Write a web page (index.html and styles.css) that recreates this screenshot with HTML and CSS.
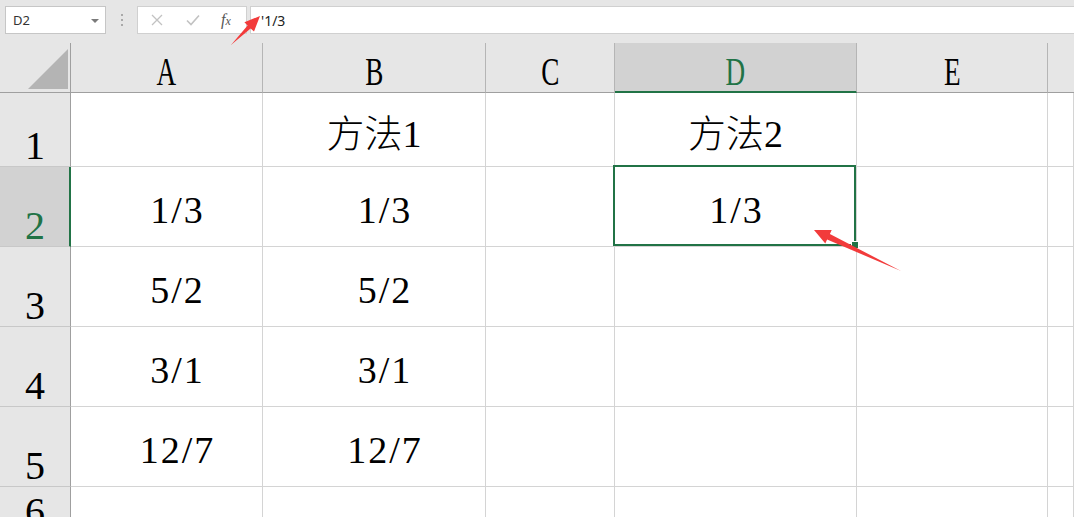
FILE: index.html
```html
<!DOCTYPE html>
<html lang="zh">
<head>
<meta charset="utf-8">
<title>Sheet</title>
<link rel="stylesheet" href="styles.css">
</head>
<body>
<div class="app">
  <div class="fbar">
    <div class="namebox"><span class="name">D2</span><span class="caret"></span></div>
    <div class="grip"><i></i><i></i><i></i></div>
    <div class="btns">
      <svg class="ico" width="12" height="12" viewBox="0 0 12 12"><path d="M1 1L11 11M11 1L1 11" stroke="#c2c2c2" stroke-width="1.3" fill="none"/></svg>
      <svg class="ico" width="14" height="12" viewBox="0 0 14 12"><path d="M1 6.5L5 10.5L13 1.5" stroke="#c2c2c2" stroke-width="1.6" fill="none"/></svg>
      <span class="fx">f<span class="fxx">x</span></span>
    </div>
    <div class="input">'1/3</div>
  </div>

  <div class="sheet">
    <div class="corner"><svg width="40" height="40" viewBox="0 0 40 40"><polygon points="40,0 40,40 0,40" fill="#b4b4b4"/></svg></div>
    <div class="ch"><span>A</span></div>
    <div class="ch"><span>B</span></div>
    <div class="ch"><span>C</span></div>
    <div class="ch sel"><span>D</span></div>
    <div class="ch"><span>E</span></div>
    <div class="ch last"></div>

    <div class="rh">1</div>
    <div class="c"></div>
    <div class="c cjk">方法1</div>
    <div class="c"></div>
    <div class="c cjk">方法2</div>
    <div class="c"></div>
    <div class="c"></div>

    <div class="rh sel">2</div>
    <div class="c num">1/3</div>
    <div class="c num">1/3</div>
    <div class="c"></div>
    <div class="c txt active">1/3</div>
    <div class="c"></div>
    <div class="c"></div>

    <div class="rh">3</div>
    <div class="c num">5/2</div>
    <div class="c num">5/2</div>
    <div class="c"></div>
    <div class="c"></div>
    <div class="c"></div>
    <div class="c"></div>

    <div class="rh">4</div>
    <div class="c num">3/1</div>
    <div class="c num">3/1</div>
    <div class="c"></div>
    <div class="c"></div>
    <div class="c"></div>
    <div class="c"></div>

    <div class="rh">5</div>
    <div class="c num">12/7</div>
    <div class="c num">12/7</div>
    <div class="c"></div>
    <div class="c"></div>
    <div class="c"></div>
    <div class="c"></div>

    <div class="rh">6</div>
    <div class="c"></div>
    <div class="c"></div>
    <div class="c"></div>
    <div class="c"></div>
    <div class="c"></div>
    <div class="c"></div>
  </div>

  <svg class="annot" width="1074" height="517" viewBox="0 0 1074 517">
    <polygon points="260,16 244.4,22.2 247.6,25.6 231,45 250.6,28.4 254,31.6" fill="#f23b3b"/>
    <polygon points="814,230 831.7,230 829.9,234 901,271 827.1,239.5 825.3,243.6" fill="#f23b3b"/>
  </svg>
</div>
</body>
</html>
```

FILE: styles.css
```css
* { box-sizing: border-box; }

html, body {
  margin: 0;
  padding: 0;
  width: 1074px;
  height: 517px;
  overflow: hidden;
  background: #e6e6e6;
}

.app {
  position: relative;
  width: 1074px;
  height: 517px;
  overflow: hidden;
  background: #e6e6e6;
}

/* formula bar */
.fbar {
  display: flex;
  align-items: stretch;
  height: 34px;
  padding: 6px 0 0 5px;
  font-family: "Noto Sans", "Open Sans", sans-serif;
}

.namebox {
  width: 101px;
  background: #fff;
  border: 1px solid #c6c6c6;
  display: flex;
  align-items: center;
  justify-content: space-between;
  padding: 0 6px 0 7px;
}

.name {
  font-size: 13px;
  color: #333;
}

.caret {
  width: 0;
  height: 0;
  border-left: 4px solid transparent;
  border-right: 4px solid transparent;
  border-top: 4px solid #7a7a7a;
  margin-top: 1px;
}

.grip {
  width: 31px;
  display: flex;
  flex-direction: column;
  align-items: center;
  justify-content: center;
  gap: 3px;
}

.grip i {
  display: block;
  width: 2px;
  height: 2px;
  background: #a9a9a9;
}

.btns {
  width: 110px;
  background: #fff;
  border: 1px solid #d0d0d0;
  display: flex;
  align-items: center;
  padding: 0 0 0 13px;
}

.btns .ico:first-child { margin-right: 23px; }
.btns .ico:nth-child(2) { margin-right: 21px; }

.fx {
  font-family: "Liberation Serif", serif;
  font-style: italic;
  font-size: 16px;
  color: #555;
}

.fxx {
  font-size: 12px;
}

.input {
  flex: 1;
  margin-left: 3px;
  background: #fff;
  border: 1px solid #d0d0d0;
  border-right: none;
  padding-left: 10px;
  display: flex;
  align-items: center;
  font-size: 14px;
  color: #222;
}

/* sheet */
.sheet {
  margin-top: 9px;
  display: grid;
  grid-template-columns: 71px 192px 223px 129px 242px 191px 1fr;
  grid-template-rows: 50px 74px repeat(4, 80px) 46px;
  background: #fff;
}

.corner {
  background: #e6e6e6;
  border-right: 1px solid #9f9f9f;
  border-bottom: 1px solid #9f9f9f;
  display: flex;
  justify-content: flex-end;
  align-items: flex-end;
  padding: 0 2px 3px 0;
}

.corner svg { display: block; }

.ch {
  background: #e6e6e6;
  border-right: 1px solid #b5b5b5;
  border-bottom: 1px solid #9f9f9f;
  display: flex;
  align-items: flex-end;
  justify-content: center;
  font: 40px/1 "Liberation Serif", serif;
  color: #000;
}

.ch span {
  display: inline-block;
  transform: scaleX(0.68);
}

.ch.sel {
  background: #d2d2d2;
  border-bottom: 2px solid #217346;
  color: #217346;
}

.ch.sel span { margin-bottom: -1px; }

.ch.last { border-right: none; }

.rh {
  background: #e6e6e6;
  border-right: 1px solid #9f9f9f;
  border-bottom: 1px solid #c8c8c8;
  display: flex;
  align-items: flex-end;
  justify-content: center;
  font: 40px/1 "Liberation Serif", serif;
  color: #000;
}

.rh.sel {
  background: #d2d2d2;
  border-right: 2px solid #217346;
  color: #217346;
  padding-left: 1px;
}

.c {
  background: #fff;
  border-right: 1px solid #d4d4d4;
  border-bottom: 1px solid #d4d4d4;
  display: flex;
  align-items: center;
  justify-content: center;
  padding-top: 6px;
  font: 38px/1 "Liberation Serif", "Noto Sans CJK SC", serif;
  color: #000;
  white-space: nowrap;
}

.c.cjk {
  font-weight: 300;
  padding-top: 8px;
}

.c.num {
  padding-left: 22px;
  letter-spacing: 2px;
}

.c.txt {
  letter-spacing: 2px;
  padding-left: 2px;
}

.active {
  position: relative;
}

.active::after {
  content: "";
  position: absolute;
  top: -2px;
  left: -2px;
  right: 0;
  bottom: 0;
  border: 2px solid #217346;
  z-index: 1;
}

.active::before {
  content: "";
  position: absolute;
  right: -3px;
  bottom: -3px;
  width: 6px;
  height: 6px;
  background: #217346;
  border: 1px solid #fff;
  z-index: 2;
}

.annot {
  position: absolute;
  top: 0;
  left: 0;
  pointer-events: none;
  z-index: 5;
}
```
